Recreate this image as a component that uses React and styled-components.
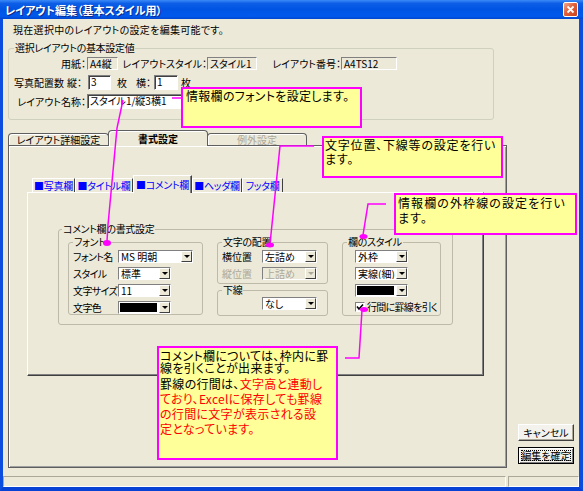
import React from "react";
import styled, { createGlobalStyle, css } from "styled-components";

const GlobalStyle = createGlobalStyle`
  * { box-sizing: border-box; }
  html, body { margin: 0; padding: 0; background: #ECE9D8; }
  body { font-family: "Noto Sans CJK JP", "Liberation Sans", sans-serif; }
`;

const Window = styled.div`
  position: relative;
  width: 583px;
  height: 491px;
  display: flex;
  flex-direction: column;
  overflow: hidden;
  background: #ECE9D8;
  color: #000;
  font-family: "Noto Sans CJK JP", "Liberation Sans", sans-serif;
  font-size: 10px;
  line-height: 12px;
  font-feature-settings: "palt";
`;

const TitleBar = styled.div`
  flex: none;
  height: 19px;
  display: flex;
  align-items: center;
  justify-content: space-between;
  padding: 0 5px;
  background: linear-gradient(180deg, #3A8AF8 0%, #0D5EE6 18%, #0054E3 50%, #0059EC 85%, #0046CF 100%);
`;

const Title = styled.span`
  color: #fff;
  font-weight: bold;
  font-size: 11px;
  text-shadow: 1px 1px 0 #0a2a8c;
`;

const CloseButton = styled.div`
  width: 15px;
  height: 15px;
  display: flex;
  align-items: center;
  justify-content: center;
  border: 1px solid #fff;
  border-radius: 2px;
  background: linear-gradient(135deg, #F2A88F 0%, #E2603A 45%, #C8431E 100%);
`;

const Frame = styled.div`
  flex: 1;
  display: flex;
  flex-direction: column;
  border-left: 3px solid #0A4DDF;
  border-right: 4px solid #0A4DDF;
  border-bottom: 4px solid #0842D4;
`;

const Content = styled.div`
  flex: 1;
  display: flex;
  flex-direction: column;
  padding-top: 5px;
`;

const Intro = styled.div`
  height: 12px;
  margin-left: 10px;
  letter-spacing: 0.3px;
  white-space: nowrap;
`;

const Group = styled.fieldset`
  margin: 0;
  min-width: 0;
  flex: none;
  width: ${(p) => p.$w}px;
  height: ${(p) => p.$h}px;
  padding: 0 0 0 ${(p) => p.$pl ?? 4}px;
  border: 1px solid ${(p) => (p.$xp ? "#D0D0BF" : "#BDBAAA")};
  border-radius: 3px;
`;

const Legend = styled.legend`
  padding: 0 1px;
  line-height: 12px;
  letter-spacing: -0.3px;
  white-space: nowrap;
`;

const InfoGroup = styled(Group)`
  margin: 6px 0 0 5px;
`;

const Row = styled.div`
  display: flex;
  align-items: center;
  height: ${(p) => p.$h}px;
  margin-left: ${(p) => p.$ml || 0}px;
  white-space: nowrap;
`;

const Label = styled.span`
  flex: none;
  width: ${(p) => p.$w}px;
  margin-left: ${(p) => p.$ml || 0}px;
  text-align: ${(p) => p.$align || "left"};
  letter-spacing: ${(p) => (p.$tight ? -0.6 : 0)}px;
  color: ${(p) => (p.$disabled ? "#ACA899" : "inherit")};
  white-space: nowrap;
`;

const sunken = css`
  border-style: solid;
  border-width: 1px;
  border-color: #808080 #fff #fff #808080;
`;

const ReadBox = styled.div`
  ${sunken};
  flex: none;
  width: ${(p) => p.$w}px;
  height: 13px;
  margin-left: ${(p) => p.$ml || 0}px;
  padding-left: 2px;
  line-height: 11px;
  background: #ECE9D8;
  overflow: hidden;
`;

const TextInput = styled.div`
  ${sunken};
  flex: none;
  width: ${(p) => p.$w}px;
  height: 15px;
  margin-left: ${(p) => p.$ml || 0}px;
  padding-left: 2px;
  line-height: 12px;
  background: #fff;
  box-shadow: inset 1px 1px 0 #404040;
  overflow: hidden;
`;

const MainRow = styled.div`
  display: flex;
  height: 338px;
  margin: 10px 0 0 5px;
`;

const TabControl = styled.div`
  width: 499px;
  display: flex;
  flex-direction: column;
`;

const TabStrip = styled.div`
  flex: none;
  height: 15px;
  display: flex;
  align-items: flex-end;
  position: relative;
  z-index: 2;
`;

const OuterTab = styled.div`
  flex: none;
  width: ${(p) => p.$w}px;
  height: ${(p) => (p.$active ? 16 : 12)}px;
  margin-bottom: ${(p) => (p.$active ? -1 : 0)}px;
  margin-left: ${(p) => (p.$first ? 0 : -1)}px;
  display: flex;
  align-items: center;
  justify-content: center;
  border: 1px solid #5f5f5f;
  border-bottom: none;
  border-radius: 4px 4px 0 0;
  background: #ECE9D8;
  box-shadow: inset 1px 1px 0 #fff;
  position: relative;
  z-index: ${(p) => (p.$active ? 2 : 1)};
  font-weight: ${(p) => (p.$active ? "bold" : "normal")};
  color: ${(p) => (p.$disabled ? "#ACA899" : "#000")};
`;

const TabPanel = styled.div`
  flex: 1;
  border: 1px solid #5f5f5f;
  box-shadow: inset 1px 1px 0 #fff, inset -1px -1px 0 #a0a0a0;
  padding: 29px 0 0 18px;
`;

const InnerTabs = styled.div`
  width: 457px;
  display: flex;
  flex-direction: column;
`;

const InnerStrip = styled.div`
  height: 17px;
  display: flex;
  align-items: flex-end;
  padding-left: 5px;
  position: relative;
  z-index: 2;
`;

const InnerTab = styled.div`
  flex: none;
  width: ${(p) => p.$w}px;
  height: ${(p) => (p.$active ? 18 : 14)}px;
  margin-bottom: ${(p) => (p.$active ? -1 : 0)}px;
  display: flex;
  align-items: center;
  justify-content: center;
  border-style: solid;
  border-width: 1px 1px 0 1px;
  border-color: #fff #404040 transparent #fff;
  background: #ECE9D8;
  color: #0000FF;
  letter-spacing: -0.3px;
  white-space: nowrap;
  ${(p) =>
    p.$active &&
    css`
      box-shadow: inset -1px 0 0 #808080;
    `}
`;

const InnerPanel = styled.div`
  height: 184px;
  border-style: solid;
  border-width: 1px;
  border-color: #fff #404040 #404040 #fff;
  box-shadow: inset -1px -1px 0 #808080;
  padding: 30px 0 0 30px;
`;

const Columns = styled.div`
  display: flex;
  align-items: flex-start;
  gap: 14px;
  margin: 1px 0 0 6px;
`;

const MidColumn = styled.div`
  display: flex;
  flex-direction: column;
  width: 111px;
`;

const Combo = styled.div`
  ${sunken};
  flex: none;
  width: ${(p) => p.$w}px;
  height: 13px;
  display: flex;
  background: ${(p) => (p.$disabled ? "#ECE9D8" : "#fff")};
  color: ${(p) => (p.$disabled ? "#ACA899" : "#000")};
`;

const ComboText = styled.span`
  flex: 1;
  padding-left: 2px;
  line-height: 11px;
  overflow: hidden;
  white-space: nowrap;
`;

const Swatch = styled.span`
  flex: 1;
  margin: 1px 2px 1px 1px;
  background: #000;
`;

const DropButton = styled.span`
  flex: none;
  width: 11px;
  display: flex;
  align-items: center;
  justify-content: center;
  background: #ECE9D8;
  border-style: solid;
  border-width: 1px;
  border-color: #fff #404040 #404040 #fff;

  &::after {
    content: "";
    border-left: 3px solid transparent;
    border-right: 3px solid transparent;
    border-top: 3px solid ${(p) => (p.$disabled ? "#ACA899" : "#000")};
  }
`;

const CheckBox = styled.span`
  ${sunken};
  flex: none;
  width: 10px;
  height: 10px;
  margin-right: 2px;
  display: flex;
  align-items: center;
  justify-content: center;
  background: #fff;
`;

const CheckText = styled.span`
  letter-spacing: -0.7px;
`;

const SideColumn = styled.div`
  width: 56px;
  margin-left: 11px;
  display: flex;
  flex-direction: column;
  justify-content: flex-end;
  gap: 6px;
  padding-bottom: 4px;
`;

const PushButton = styled.div`
  height: 17px;
  display: flex;
  align-items: center;
  justify-content: center;
  background: #F3F2EC;
  border-style: solid;
  border-width: 1px;
  border-color: #fff #404040 #404040 #fff;
  box-shadow: inset -1px -1px 0 #ACA899;
  white-space: nowrap;
  ${(p) =>
    p.$default &&
    css`
      border-color: #000;
      box-shadow: inset 1px 1px 0 #fff, inset -1px -1px 0 #808080;
      outline: 1px dotted #000;
      outline-offset: -4px;
    `}
`;

const StatusBar = styled.div`
  flex: none;
  height: 11px;
  margin-top: 8px;
  display: flex;
  gap: 2px;
`;

const StatusPane = styled.div`
  ${sunken};
  border-color: #ACA899 #fff #fff #ACA899;
  flex: ${(p) => (p.$w ? "none" : 1)};
  width: ${(p) => (p.$w ? `${p.$w}px` : "auto")};
`;

const Note = styled.div`
  position: absolute;
  left: ${(p) => p.$x}px;
  top: ${(p) => p.$y}px;
  width: ${(p) => p.$w}px;
  height: ${(p) => p.$h}px;
  padding: ${(p) => p.$pad};
  background: #FFFF99;
  border: 2px solid #FF00FF;
  font-size: 12px;
  line-height: ${(p) => p.$lh}px;
  letter-spacing: ${(p) => p.$ls}px;
  white-space: nowrap;
  z-index: 5;
`;

const NotePara = styled.div`
  line-height: ${(p) => p.$lh}px;
  margin-top: ${(p) => p.$mt || 0}px;
`;

const Red = styled.span`
  color: #FF0000;
`;

const Overlay = styled.svg`
  position: absolute;
  left: 0;
  top: 0;
  z-index: 4;
  pointer-events: none;
`;

function ComboBox({ w, value, color, disabled }) {
  return (
    <Combo $w={w} $disabled={disabled}>
      {color ? <Swatch /> : <ComboText>{value}</ComboText>}
      <DropButton $disabled={disabled} />
    </Combo>
  );
}

const innerTabs = [
  { label: "■写真欄", w: 43 },
  { label: "■タイトル欄", w: 58 },
  { label: "■コメント欄", w: 59, active: true },
  { label: "■ヘッダ欄", w: 50 },
  { label: "フッタ欄", w: 41 },
];

export default function App() {
  return (
    <Window>
      <GlobalStyle />
      <TitleBar>
        <Title>レイアウト編集（基本スタイル用）</Title>
        <CloseButton>
          <svg width="9" height="9" viewBox="0 0 9 9">
            <path d="M1.5 1.5 L7.5 7.5 M7.5 1.5 L1.5 7.5" stroke="#fff" strokeWidth="1.8" />
          </svg>
        </CloseButton>
      </TitleBar>

      <Frame>
        <Content>
          <Intro>現在選択中のレイアウトの設定を編集可能です。</Intro>

          <InfoGroup $w={486} $h={78} $pl={5} $xp>
            <Legend>選択レイアウトの基本設定値</Legend>
            <Row $h={19}>
              <Label $w={72} $align="right">用紙：</Label>
              <ReadBox $w={31} $ml={1}>A4縦</ReadBox>
              <Label $w={89} $align="right">レイアウトスタイル：</Label>
              <ReadBox $w={50}>スタイル1</ReadBox>
              <Label $w={84} $align="right">レイアウト番号：</Label>
              <ReadBox $w={56}>A4TS12</ReadBox>
            </Row>
            <Row $h={19}>
              <Label $w={53}>写真配置数</Label>
              <Label $w={21}>縦：</Label>
              <TextInput $w={23}>3</TextInput>
              <Label $w={19} $ml={6}>枚</Label>
              <Label $w={18}>横：</Label>
              <TextInput $w={24}>1</TextInput>
              <Label $w={20} $ml={3}>枚</Label>
            </Row>
            <Row $h={19}>
              <Label $w={72} $align="right">レイアウト名称：</Label>
              <TextInput $w={180} $ml={1}>スタイル1/縦3横1</TextInput>
            </Row>
          </InfoGroup>

          <MainRow>
            <TabControl>
              <TabStrip>
                <OuterTab $w={101} $first>レイアウト詳細設定</OuterTab>
                <OuterTab $w={100} $active>書式設定</OuterTab>
                <OuterTab $w={100} $disabled>例外設定</OuterTab>
              </TabStrip>
              <TabPanel>
                <InnerTabs>
                  <InnerStrip>
                    {innerTabs.map((t) => (
                      <InnerTab key={t.label} $w={t.w} $active={t.active}>
                        {t.label}
                      </InnerTab>
                    ))}
                  </InnerStrip>
                  <InnerPanel>
                    <Group $w={395} $h={102} $pl={3}>
                      <Legend>コメント欄の書式設定</Legend>
                      <Columns>
                        <Group $w={135} $h={79}>
                          <Legend>フォント</Legend>
                          <Row $h={17}>
                            <Label $w={45} $tight>フォント名</Label>
                            <ComboBox w={75} value="MS 明朝" />
                          </Row>
                          <Row $h={17}>
                            <Label $w={45} $tight>スタイル</Label>
                            <ComboBox w={53} value="標準" />
                          </Row>
                          <Row $h={17}>
                            <Label $w={45} $tight>文字サイズ</Label>
                            <ComboBox w={53} value="11" />
                          </Row>
                          <Row $h={17}>
                            <Label $w={45} $tight>文字色</Label>
                            <ComboBox w={53} color />
                          </Row>
                        </Group>

                        <MidColumn>
                          <Group $w={111} $h={48}>
                            <Legend>文字の配置</Legend>
                            <Row $h={17}>
                              <Label $w={40}>横位置</Label>
                              <ComboBox w={55} value="左詰め" />
                            </Row>
                            <Row $h={17}>
                              <Label $w={40} $disabled>縦位置</Label>
                              <ComboBox w={55} value="上詰め" disabled />
                            </Row>
                          </Group>
                          <Group $w={111} $h={32}>
                            <Legend>下線</Legend>
                            <Row $h={14}>
                              <Label $w={40} />
                              <ComboBox w={55} value="なし" />
                            </Row>
                          </Group>
                        </MidColumn>

                        <Group $w={99} $h={80}>
                          <Legend>欄のスタイル</Legend>
                          <Row $h={17} $ml={8}>
                            <ComboBox w={53} value="外枠" />
                          </Row>
                          <Row $h={17} $ml={8}>
                            <ComboBox w={53} value="実線(細)" />
                          </Row>
                          <Row $h={17} $ml={8}>
                            <ComboBox w={53} color />
                          </Row>
                          <Row $h={16} $ml={8}>
                            <CheckBox>
                              <svg width="8" height="8" viewBox="0 0 8 8">
                                <polyline points="1,3.5 3,6 7,1.5" fill="none" stroke="#000" strokeWidth="1.6" />
                              </svg>
                            </CheckBox>
                            <CheckText>行間に罫線を引く</CheckText>
                          </Row>
                        </Group>
                      </Columns>
                    </Group>
                  </InnerPanel>
                </InnerTabs>
              </TabPanel>
            </TabControl>

            <SideColumn>
              <PushButton>キャンセル</PushButton>
              <PushButton $default>編集を確定</PushButton>
            </SideColumn>
          </MainRow>

          <StatusBar>
            <StatusPane />
            <StatusPane $w={71} />
          </StatusBar>
        </Content>
      </Frame>

      <Overlay width="583" height="491" viewBox="0 0 583 491">
        <g stroke="#FF00FF" strokeWidth="1.5" fill="none">
          <polyline points="172,98 181,98" />
          <polyline points="123,100 117,128 108,225 107,241" />
          <polyline points="314,146 280,146 270,244" />
          <polyline points="386,204 368,204 363,235" />
          <polyline points="345,358 359,358 362,310" />
        </g>
        <g fill="#FF00FF">
          <ellipse cx="107" cy="243" rx="4" ry="3" />
          <ellipse cx="270" cy="245" rx="4" ry="2.5" />
          <ellipse cx="363.5" cy="236.5" rx="4" ry="2.5" />
          <ellipse cx="364" cy="309.5" rx="4" ry="2.5" />
        </g>
      </Overlay>

      <Note $x={181} $y={87} $w={181} $h={41} $pad="0 0 0 3px" $lh={14} $ls={0.3}>
        情報欄のフォントを設定します。
      </Note>
      <Note $x={322} $y={136} $w={181} $h={42} $pad="0 0 0 1px" $lh={14} $ls={0.8}>
        文字位置、下線等の設定を行い
        <br />
        ます。
      </Note>
      <Note $x={394} $y={193} $w={183} $h={42} $pad="0 0 0 2px" $lh={15} $ls={1.1}>
        情報欄の外枠線の設定を行い
        <br />
        ます。
      </Note>
      <Note $x={157} $y={346} $w={181} $h={114} $pad="2px 0 0 1px" $lh={15} $ls={0.3}>
        <NotePara $lh={12}>
          コメント欄については、枠内に罫
          <br />
          線を引くことが出来ます。
        </NotePara>
        <NotePara $lh={15} $mt={2}>
          罫線の行間は、<Red>文字高と連動し</Red>
          <br />
          <Red>ており、Excelに保存しても罫線</Red>
          <br />
          <Red>の行間に文字が表示される設</Red>
          <br />
          <Red>定となっています。</Red>
        </NotePara>
      </Note>
    </Window>
  );
}
